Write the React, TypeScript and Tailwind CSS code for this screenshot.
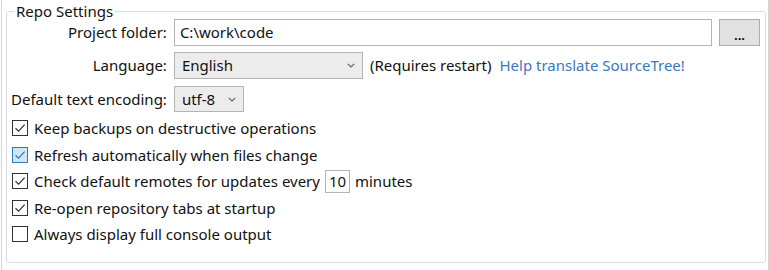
import React from "react";

function Check({ checked, hover }: { checked: boolean; hover?: boolean }) {
  return (
    <span
      className={
        "flex h-[16px] w-[16px] shrink-0 items-center justify-center border " +
        (hover ? "border-[#2b79c8] bg-[#d0e6f8]" : "border-[#333333] bg-white")
      }
    >
      {checked && (
        <svg width="12" height="12" viewBox="0 0 12 12">
          <path
            d="M1.5 6.2 L4.6 9.2 L10.6 2.6"
            fill="none"
            stroke={hover ? "#2b79c8" : "#333333"}
            strokeWidth="1.2"
          />
        </svg>
      )}
    </span>
  );
}

function Chevron() {
  return (
    <svg width="8" height="5" viewBox="0 0 8 5" className="shrink-0">
      <path d="M0.8 0.8 L4 4 L7.2 0.8" fill="none" stroke="#606060" strokeWidth="1.1" />
    </svg>
  );
}

function Row({ children }: { children: React.ReactNode }) {
  return <div className="flex h-[26.5px] items-center gap-[6px]">{children}</div>;
}

export default function App() {
  return (
    <div
      className="h-[270px] w-[769px] overflow-hidden bg-white pl-px text-[15px] text-[#111111]"
      style={{ fontFamily: '"Noto Sans", "Open Sans", sans-serif' }}
    >
      <div className="h-full border-l border-r border-[#d6d6d6] pl-[4px] pr-[2px] pt-[2px]">
        <fieldset className="h-[261px] rounded-[3px] border border-[#d8dee3] pl-[4px] pr-[5px]">
          <legend className="ml-[3px] px-[2px] leading-[18px]">Repo Settings</legend>
          <div className="grid grid-cols-[auto_1fr] items-center gap-x-[7px] pl-0">
            <div className="-mt-px text-right">Project folder:</div>
            <div className="-mt-px flex h-[27px] gap-[7px]">
              <div className="flex flex-1 items-center border border-[#b4b4b4] bg-white pl-[5px]">
                C:\work\code
              </div>
              <div className="flex w-[41px] items-end justify-center border border-[#adadad] bg-[#e1e1e1] pb-[3px] text-[13px] font-bold leading-none">
                ...
              </div>
            </div>

            <div className="mt-[6px] text-right">Language:</div>
            <div className="mt-[6px] flex h-[27px] items-center">
              <div className="flex h-full w-[189px] items-center justify-between border border-[#b4b4b4] bg-[#ececec] pl-[7px] pr-[7px]">
                <span>English</span>
                <Chevron />
              </div>
              <span className="ml-[7px]">(Requires restart)</span>
              <span className="ml-[8px] text-[#3c78be]">Help translate SourceTree!</span>
            </div>

            <div className="mt-[7px] text-right">Default text encoding:</div>
            <div className="mt-[7px] flex h-[26px] items-center">
              <div className="flex h-full w-[70px] items-center justify-between border border-[#b4b4b4] bg-[#ececec] pl-[7px] pr-[7px]">
                <span>utf-8</span>
                <Chevron />
              </div>
            </div>
          </div>

          <div className="mt-[3px] flex flex-col pl-[1px]">
            <Row>
              <Check checked />
              <span>Keep backups on destructive operations</span>
            </Row>
            <Row>
              <Check checked hover />
              <span>Refresh automatically when files change</span>
            </Row>
            <Row>
              <Check checked />
              <span className="flex items-center">
                Check default remotes for updates every
                <span className="mx-[5px] flex h-[23px] w-[25px] items-center justify-center border border-[#b4b4b4]">
                  10
                </span>
                minutes
              </span>
            </Row>
            <Row>
              <Check checked />
              <span>Re-open repository tabs at startup</span>
            </Row>
            <Row>
              <Check checked={false} />
              <span>Always display full console output</span>
            </Row>
          </div>
        </fieldset>
      </div>
    </div>
  );
}
